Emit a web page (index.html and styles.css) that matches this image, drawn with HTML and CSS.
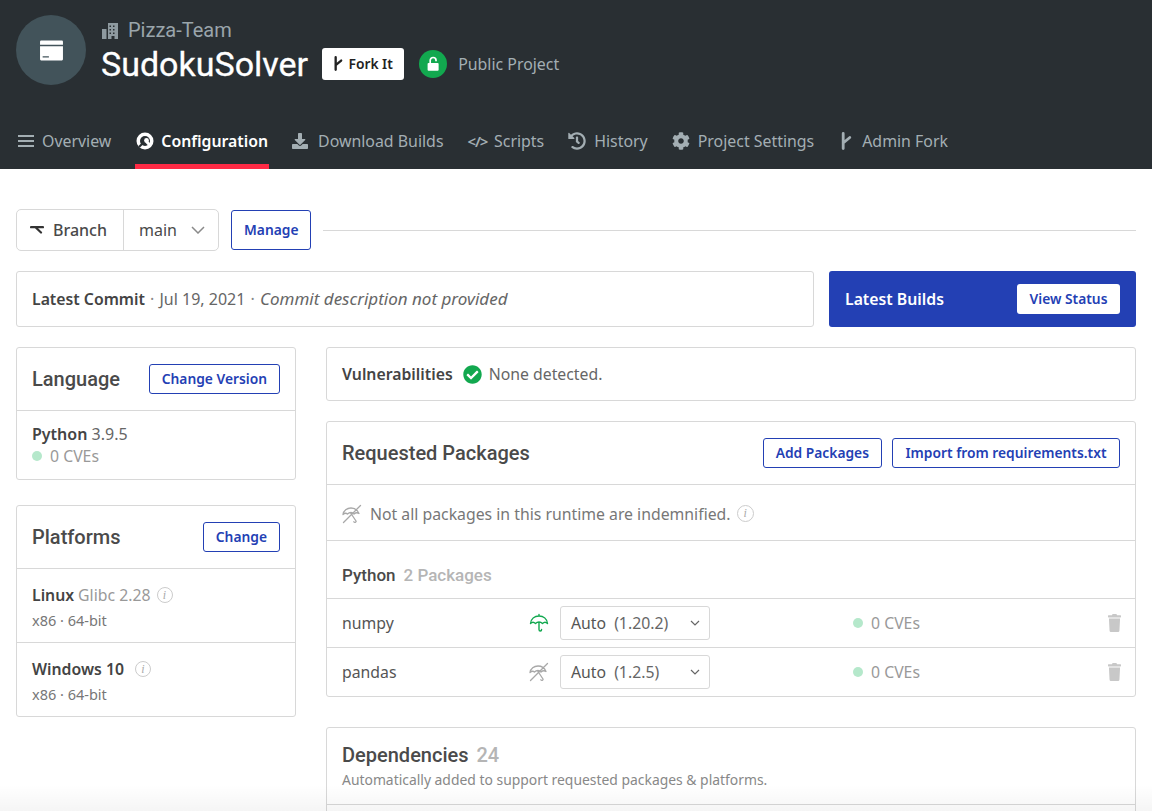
FILE: index.html
```html
<!DOCTYPE html>
<html lang="en">
<head>
    <meta charset="UTF-8">
    <meta name="viewport" content="width=device-width, initial-scale=1.0">
    <title>SudokuSolver</title>
    <link rel="stylesheet" href="styles.css">
</head>
<body>
    <svg class="icon-defs" xmlns="http://www.w3.org/2000/svg">
        <symbol id="i-fork" viewBox="0 0 12 18">
            <path d="M3.200 1.500V16.500M3.200 11L9.800 5.500" fill="none" stroke="currentColor" stroke-width="2.800" stroke-linecap="round"/>
        </symbol>
        <symbol id="i-trash" viewBox="0 0 448 512" preserveAspectRatio="none">
            <path d="M432 32H312l-9.400-18.700A24 24 0 0 0 281.100 0H166.800a23.720 23.720 0 0 0-21.400 13.300L136 32H16A16 16 0 0 0 0 48v32a16 16 0 0 0 16 16h416a16 16 0 0 0 16-16V48a16 16 0 0 0-16-16zM53.200 467a48 48 0 0 0 47.900 45h245.800a48 48 0 0 0 47.900-45L416 128H32z"/>
        </symbol>
        <symbol id="i-umbrella" viewBox="0 0 20 20">
            <path d="M1.500 10.500C2 6 5.500 3 10 3s8 3 8.500 7.500C17 9 15 9 13.500 10.500 12.500 9.500 11.200 9 10 9s-2.500.5-3.500 1.500C5 9 3 9 1.500 10.500zM10 3V1.500M10 9v7.500c0 2 2.600 2 2.600 0" fill="none" stroke="currentColor" stroke-width="1.400" stroke-linecap="round" stroke-linejoin="round"/>
        </symbol>
        <symbol id="i-no-umbrella" viewBox="0 0 20 20">
            <path d="M1 10.500C1.500 6.500 5 4 9 4c3.500 0 6.500 2 8 5.500-1.500-1-3.500-.8-5 .5-1-1-2-1.500-3-1.500S6.500 9 5.500 10C4 8.800 2.500 9.200 1 10.500zM9 9.500l5 7.500c.5 1.200-1.500 2-2.200.7M1.500 18.500L18.500 1.500" fill="none" stroke="currentColor" stroke-width="1.300" stroke-linecap="round" stroke-linejoin="round"/>
        </symbol>
    </svg>

    <header class="project-header">
        <div class="project-top">
            <div class="avatar">
                <svg class="avatar-icon" viewBox="0 0 24 24"><path d="M2 2.500h20a1 1 0 0 1 1 1V6.500H1V3.500a1 1 0 0 1 1-1zM1 8h22v12.500a1 1 0 0 1-1 1H2a1 1 0 0 1-1-1zM3.500 17.500v1.200h6v-1.200z" fill-rule="evenodd"/></svg>
            </div>
            <div class="project-info">
                <div class="org-name">
                    <svg class="org-icon" viewBox="0 0 16 16"><path d="M6 0h10v16h-3.500v-3h-3v3H6zM7.500 2.500V4H9V2.500zm3.500 0V4h1.500V2.500zM7.500 6v1.500H9V6zM11 6v1.500h1.500V6zM7.500 9.500V11H9V9.500zm3.500 0V11h1.500V9.500zM0 6h4.500v10H0z" fill-rule="evenodd"/></svg>
                    Pizza-Team
                </div>
                <div class="title-row">
                    <h1>SudokuSolver</h1>
                    <button class="fork-btn"><svg class="fork-icon"><use href="#i-fork"/></svg>Fork It</button>
                    <span class="lock-badge">
                        <svg viewBox="0 0 16 16"><path d="M4 7.200h8.200c.5 0 .8.300.8.800v5.200c0 .5-.3.800-.8.800H4c-.5 0-.8-.3-.8-.8V8c0-.5.300-.8.800-.8z"/><path d="M5.500 7.500V4.800a2.600 2.600 0 0 1 5.200 0v.8" fill="none" stroke="#fff" stroke-width="1.500"/></svg>
                    </span>
                    <span class="visibility">Public Project</span>
                </div>
            </div>
        </div>
        <nav class="tabs">
            <a class="tab">
                <svg class="tab-icon" viewBox="0 0 16 16"><path d="M0 2h16v2H0zM0 7h16v2H0zM0 12h16v2H0z"/></svg>
                Overview
            </a>
            <a class="tab active">
                <svg class="tab-icon wide" viewBox="0 0 18 18">
                    <circle cx="9" cy="9" r="8.500"/>
                    <circle cx="9" cy="9" r="5" fill="#292f33"/>
                    <path d="M10.500 9.500L14.500 14" fill="none" stroke="#fff" stroke-width="3"/>
                    <circle cx="10.500" cy="8.500" r="2.400"/>
                    <path d="M3 15L7 11" fill="none" stroke="#292f33" stroke-width="2.200"/>
                </svg>
                Configuration
            </a>
            <a class="tab tab-download">
                <svg class="tab-icon" viewBox="0 0 512 512"><path d="M216 0h80c13.300 0 24 10.700 24 24v168h87.700c17.800 0 26.700 21.500 14.100 34.100L269.700 378.300c-7.500 7.500-19.800 7.500-27.300 0L90.100 226.100c-12.600-12.600-3.700-34.100 14.100-34.100H192V24c0-13.300 10.700-24 24-24zm296 376v112c0 13.300-10.700 24-24 24H24c-13.300 0-24-10.700-24-24V376c0-13.300 10.700-24 24-24h146.700l49 49c20.100 20.100 52.500 20.100 72.600 0l49-49H488c13.300 0 24 10.700 24 24z"/></svg>
                Download Builds
            </a>
            <a class="tab tab-scripts">
                <span class="code-glyph">&lt;/&gt;</span>
                Scripts
            </a>
            <a class="tab">
                <svg class="tab-icon wide" viewBox="0 0 512 512"><path d="M504 255.531c.253 136.640-111.180 248.372-247.820 248.468-59.015.042-113.223-20.530-155.822-54.911-11.077-8.940-11.905-25.541-1.839-35.607l11.267-11.267c8.609-8.609 22.353-9.551 31.891-1.984C173.062 425.135 212.781 440 256 440c101.705 0 184-82.311 184-184 0-101.705-82.311-184-184-184-48.814 0-93.149 18.969-126.068 49.932l50.754 50.754c10.080 10.080 2.941 27.314-11.313 27.314H24c-8.837 0-16-7.163-16-16V38.627c0-14.254 17.234-21.393 27.314-11.314l49.372 49.372C129.209 34.136 189.552 8 256 8c136.810 0 247.747 110.780 248 247.531zm-180.912 78.784l9.823-12.630c8.138-10.463 6.253-25.542-4.210-33.679L288 256.349V152c0-13.255-10.745-24-24-24h-16c-13.255 0-24 10.745-24 24v135.651l65.409 50.874c10.463 8.137 25.541 6.253 33.679-4.210z"/></svg>
                History
            </a>
            <a class="tab">
                <svg class="tab-icon wide" viewBox="0 0 512 512"><path d="M487.400 315.700l-42.600-24.600c4.300-23.200 4.300-47 0-70.200l42.600-24.600c4.900-2.800 7.100-8.600 5.500-14-11.100-35.600-30-67.800-54.700-94.600-3.800-4.100-10-5.100-14.800-2.300L380.800 110c-17.900-15.400-38.500-27.300-60.800-35.100V25.800c0-5.600-3.900-10.500-9.400-11.700-36.700-8.200-74.300-7.800-109.200 0-5.500 1.200-9.400 6.100-9.400 11.700V75c-22.200 7.900-42.800 19.800-60.800 35.100L88.700 85.500c-4.900-2.800-11-1.900-14.800 2.300-24.700 26.700-43.600 58.900-54.700 94.600-1.700 5.400.6 11.200 5.500 14L67.300 221c-4.300 23.200-4.300 47 0 70.200l-42.600 24.600c-4.900 2.800-7.100 8.600-5.500 14 11.100 35.600 30 67.800 54.700 94.600 3.800 4.100 10 5.100 14.800 2.300l42.600-24.600c17.900 15.400 38.500 27.300 60.800 35.100v49.200c0 5.600 3.900 10.500 9.400 11.700 36.700 8.200 74.300 7.800 109.200 0 5.500-1.200 9.400-6.100 9.400-11.700v-49.200c22.200-7.900 42.800-19.800 60.800-35.100l42.600 24.600c4.900 2.800 11 1.900 14.800-2.300 24.700-26.700 43.600-58.900 54.700-94.600 1.500-5.500-.7-11.300-5.600-14.100zM256 336c-44.100 0-80-35.900-80-80s35.900-80 80-80 80 35.900 80 80-35.900 80-80 80z"/></svg>
                Project Settings
            </a>
            <a class="tab tab-fork">
                <svg class="tab-icon narrow"><use href="#i-fork"/></svg>
                Admin Fork
            </a>
        </nav>
    </header>

    <main class="content">
        <div class="branch-row">
            <div class="branch-group">
                <div class="branch-label">
                    <svg class="branch-icon" viewBox="0 0 14 10"><path d="M1 2.200H13M6 2.800L11 7.500" fill="none" stroke="currentColor" stroke-width="2.200" stroke-linecap="round"/></svg>
                    Branch
                </div>
                <div class="branch-select">
                    main
                    <svg class="chevron-big" viewBox="0 0 14 8"><path d="M1 1l6 6 6-6" fill="none" stroke="currentColor" stroke-width="1.500"/></svg>
                </div>
            </div>
            <button class="btn">Manage</button>
            <div class="branch-line"></div>
        </div>

        <div class="commit-row">
            <div class="card commit-card">
                <p><strong>Latest Commit</strong> <span class="sep">·</span> Jul 19, 2021 <span class="sep">·</span> <em>Commit description not provided</em></p>
            </div>
            <div class="builds-card">
                <span>Latest Builds</span>
                <button class="btn-white">View Status</button>
            </div>
        </div>

        <div class="columns">
            <aside class="side-col">
                <section class="card">
                    <div class="card-head">
                        <h2>Language</h2>
                        <button class="btn">Change Version</button>
                    </div>
                    <div class="lang-body">
                        <div class="lang-name"><strong>Python</strong> <span class="muted">3.9.5</span></div>
                        <div class="cve"><i class="dot"></i>0 CVEs</div>
                    </div>
                </section>
                <section class="card">
                    <div class="card-head">
                        <h2>Platforms</h2>
                        <button class="btn">Change</button>
                    </div>
                    <div class="platform">
                        <div class="platform-name"><strong>Linux</strong> <span class="lighter">Glibc 2.28</span><span class="info">i</span></div>
                        <div class="platform-arch">x86 · 64-bit</div>
                    </div>
                    <div class="platform">
                        <div class="platform-name"><strong>Windows 10</strong><span class="info spaced">i</span></div>
                        <div class="platform-arch">x86 · 64-bit</div>
                    </div>
                </section>
            </aside>

            <div class="main-col">
                <section class="card vuln-card">
                    <strong>Vulnerabilities</strong>
                    <svg class="check" viewBox="0 0 512 512"><path d="M504 256c0 136.967-111.033 248-248 248S8 392.967 8 256 119.033 8 256 8s248 111.033 248 248zM227.314 387.314l184-184c6.248-6.248 6.248-16.379 0-22.627l-22.627-22.627c-6.248-6.249-16.379-6.249-22.628 0L216 308.118l-70.059-70.059c-6.248-6.248-16.379-6.248-22.628 0l-22.627 22.627c-6.248 6.248-6.248 16.379 0 22.627l104 104c6.249 6.249 16.379 6.249 22.628.001z"/></svg>
                    <span class="muted">None detected.</span>
                </section>

                <section class="card">
                    <div class="card-head">
                        <h2>Requested Packages</h2>
                        <div class="head-actions">
                            <button class="btn">Add Packages</button>
                            <button class="btn">Import from requirements.txt</button>
                        </div>
                    </div>
                    <div class="indemnify">
                        <svg class="no-umbrella"><use href="#i-no-umbrella"/></svg>
                        Not all packages in this runtime are indemnified.
                        <span class="info">i</span>
                    </div>
                    <div class="pkg-group">
                        <strong>Python</strong><span class="pkg-count">2 Packages</span>
                    </div>
                    <div class="pkg-row">
                        <span class="pkg-name">numpy</span>
                        <svg class="umbrella"><use href="#i-umbrella"/></svg>
                        <div class="version-select">Auto<span>(1.20.2)</span><svg class="chevron" viewBox="0 0 10 6"><path d="M1 1l4 4 4-4" fill="none" stroke="currentColor" stroke-width="1.200"/></svg></div>
                        <div class="pkg-cve"><i class="dot"></i>0 CVEs</div>
                        <svg class="trash"><use href="#i-trash"/></svg>
                    </div>
                    <div class="pkg-row">
                        <span class="pkg-name">pandas</span>
                        <svg class="no-umbrella"><use href="#i-no-umbrella"/></svg>
                        <div class="version-select">Auto<span>(1.2.5)</span><svg class="chevron" viewBox="0 0 10 6"><path d="M1 1l4 4 4-4" fill="none" stroke="currentColor" stroke-width="1.200"/></svg></div>
                        <div class="pkg-cve"><i class="dot"></i>0 CVEs</div>
                        <svg class="trash"><use href="#i-trash"/></svg>
                    </div>
                </section>

                <section class="card deps-card">
                    <div class="deps-head">
                        <h2>Dependencies <span class="deps-count">24</span></h2>
                        <p>Automatically added to support requested packages &amp; platforms.</p>
                    </div>
                </section>
            </div>
        </div>
    </main>
    <div class="bottom-fade"></div>
</body>
</html>
```

FILE: styles.css
```css
html, body {
    height: 811px;
    overflow: hidden;
}
body {
    margin: 0;
    position: relative;
    font-family: "Noto Sans", "Open Sans", sans-serif;
    font-size: 15.8px;
    color: #4a4a4a;
    background-color: white;
}
strong {
    font-weight: 600;
    color: #444;
}
button {
    font-family: inherit;
    cursor: pointer;
}
svg {
    fill: currentColor;
    flex: none;
}
.icon-defs {
    display: none;
}

/* header */
.project-header {
    height: 169px;
    box-sizing: border-box;
    padding: 15px 16px 0;
    background-color: #292f33;
    display: flex;
    flex-direction: column;
}
.project-top {
    display: flex;
    gap: 15px;
    height: 70px;
}
.avatar {
    width: 70px;
    height: 70px;
    border-radius: 50%;
    background-color: #42535a;
    display: flex;
    align-items: center;
    justify-content: center;
}
.avatar-icon {
    width: 25px;
    height: 25px;
    color: white;
}
.project-info {
    display: flex;
    flex-direction: column;
}
.org-name {
    font-family: Roboto, sans-serif;
    font-size: 20px;
    line-height: 23px;
    margin-top: 4px;
    padding-left: 1px;
    color: #9aa5ab;
    display: flex;
    align-items: center;
    gap: 10px;
}
.org-icon {
    width: 16px;
    height: 16px;
    color: #8e9aa0;
}
.title-row {
    display: flex;
    align-items: center;
    height: 36px;
    margin-top: 4px;
}
h1 {
    margin: 0;
    font-family: Roboto, sans-serif;
    font-weight: 400;
    font-size: 34px;
    color: white;
    -webkit-text-stroke: 0.3px white;
}
.fork-btn {
    margin-left: 14px;
    width: 82px;
    height: 32px;
    padding: 0 0 2px;
    border: none;
    border-radius: 3px;
    background-color: white;
    color: #222;
    font-size: 13.8px;
    font-weight: 600;
    display: flex;
    align-items: center;
    justify-content: center;
    gap: 5px;
}
.fork-icon {
    width: 10px;
    height: 15px;
}
.lock-badge {
    margin-left: 15px;
    width: 28px;
    height: 28px;
    border-radius: 50%;
    background-color: #12a84f;
    display: flex;
    align-items: center;
    justify-content: center;
    color: white;
}
.lock-badge svg {
    width: 18px;
    height: 18px;
}
.visibility {
    margin-left: 11px;
    font-size: 15.9px;
    color: #a3aeb3;
}
.tabs {
    display: flex;
    gap: 24px;
    margin-top: auto;
    margin-left: 2px;
}
.tab {
    display: flex;
    align-items: center;
    gap: 8px;
    height: 44px;
    padding-bottom: 8px;
    box-sizing: border-box;
    font-size: 15.9px;
    color: #a3aeb3;
    border-bottom: 5px solid transparent;
}
.tab.active {
    color: white;
    font-size: 15.8px;
    font-weight: 600;
    border-bottom-color: #ff2a45;
    gap: 7px;
    padding: 0 1px 8px;
    margin-right: -1px;
}
.tab-download {
    gap: 10px;
}
.tab-scripts {
    gap: 7px;
}
.tab-fork {
    margin-left: 2px;
    gap: 10px;
}
.tab-icon {
    width: 16px;
    height: 16px;
}
.tab-icon.wide {
    width: 18px;
    height: 18px;
}
.tab-icon.narrow {
    width: 12px;
    height: 18px;
}
.code-glyph {
    font-size: 15px;
    font-weight: 600;
    letter-spacing: -1.2px;
}

/* content */
.content {
    padding: 40px 16px 0;
}
.branch-row {
    display: flex;
    align-items: center;
    gap: 12px;
}
.branch-group {
    display: flex;
    height: 42px;
    width: 203px;
    box-sizing: border-box;
    border: 1px solid #d8d8d8;
    border-radius: 5px;
}
.branch-label {
    width: 107px;
    flex: none;
    border-right: 1px solid #d8d8d8;
    display: flex;
    align-items: center;
    gap: 9px;
    padding-left: 13px;
    box-sizing: border-box;
    font-size: 16px;
    font-weight: 500;
}
.branch-icon {
    width: 14px;
    height: 10px;
    color: #333;
}
.branch-select {
    flex: 1;
    display: flex;
    align-items: center;
    justify-content: space-between;
    padding: 0 13px 0 15px;
    font-size: 16px;
}
.chevron-big {
    width: 14px;
    height: 8px;
    color: #8a8a8a;
}
.btn {
    height: 30px;
    padding: 0 12px 1px;
    border: 1px solid #2340b4;
    border-radius: 3px;
    background-color: white;
    color: #2340b4;
    font-size: 13.8px;
    font-weight: 600;
    white-space: nowrap;
}
.branch-row .btn {
    height: 40px;
}
.branch-line {
    flex: 1;
    height: 1px;
    background-color: #d8d8d8;
}
.card {
    border: 1px solid #d8d8d8;
    border-radius: 3px;
    background-color: white;
}
.commit-row {
    display: flex;
    gap: 15px;
    margin-top: 20px;
    height: 56px;
}
.commit-card {
    flex: 1;
    display: flex;
    align-items: center;
    padding: 0 0 1px 15px;
    color: #666;
}
.commit-card p {
    margin: 0;
    font-size: 16px;
    line-height: 22px;
}
.commit-card strong {
    font-size: 15.8px;
}
.commit-card em {
    font-size: 17px;
    line-height: 1;
}
.sep {
    margin: 0 1px;
    color: #888;
}
.builds-card {
    width: 307px;
    box-sizing: border-box;
    padding: 0 16px;
    border-radius: 3px;
    background-color: #2340b4;
    color: white;
    font-weight: 600;
    display: flex;
    align-items: center;
    justify-content: space-between;
}
.btn-white {
    width: 103px;
    height: 30px;
    padding: 0 0 1px;
    border: none;
    border-radius: 3px;
    background-color: white;
    color: #2340b4;
    font-size: 13.8px;
    font-weight: 600;
}
.columns {
    display: flex;
    gap: 30px;
    margin-top: 20px;
    align-items: flex-start;
}
.side-col {
    width: 280px;
    flex: none;
    display: flex;
    flex-direction: column;
    gap: 25px;
}
.main-col {
    flex: 1;
    display: flex;
    flex-direction: column;
    gap: 20px;
}
.card-head {
    height: 63px;
    box-sizing: border-box;
    padding: 0 15px;
    border-bottom: 1px solid #d8d8d8;
    display: flex;
    align-items: center;
    justify-content: space-between;
}
h2 {
    margin: 0;
    font-family: Roboto, sans-serif;
    font-size: 20px;
    font-weight: 500;
    color: #4a4a4a;
}
.head-actions {
    display: flex;
    gap: 10px;
}
.head-actions .btn:last-child {
    padding: 0 12.5px 1px;
}
.muted {
    color: #666;
}
.lang-body {
    padding: 12px 15px 0;
    line-height: 22px;
    height: 56px;
}
.lang-name {
    font-size: 16px;
}
.cve {
    display: flex;
    align-items: center;
    color: #999;
}
.dot {
    width: 10px;
    height: 10px;
    border-radius: 50%;
    background-color: #b5e8cb;
    margin-right: 8px;
}
.platform {
    height: 74px;
    box-sizing: border-box;
    padding: 14px 15px 0;
    border-bottom: 1px solid #d8d8d8;
}
.platform:last-child {
    border-bottom: none;
    height: 73px;
}
.platform-name {
    display: flex;
    align-items: center;
    gap: 4px;
    line-height: 24px;
}
.lighter {
    color: #999;
}
.platform-arch {
    margin-top: 2px;
    font-size: 14.5px;
    line-height: 22px;
    color: #777;
}
.info {
    width: 16px;
    height: 16px;
    box-sizing: border-box;
    border: 1px solid #ccc;
    border-radius: 50%;
    color: #aaa;
    font-family: "Liberation Serif", serif;
    font-style: italic;
    font-size: 12px;
    line-height: 14px;
    text-align: center;
    display: inline-block;
    flex: none;
    margin-left: 2px;
}
.info.spaced {
    margin-left: 7px;
}
.indemnify .info {
    width: 17px;
    height: 17px;
    line-height: 15px;
    margin-left: 0;
}
.vuln-card {
    height: 54px;
    box-sizing: border-box;
    display: flex;
    align-items: center;
    padding-left: 15px;
}
.check {
    width: 19px;
    height: 19px;
    color: #12a84f;
    margin: 0 7px 0 10px;
}
.indemnify {
    height: 56px;
    box-sizing: border-box;
    padding: 2px 0 0 15px;
    border-bottom: 1px solid #d8d8d8;
    display: flex;
    align-items: center;
    color: #777;
    gap: 6px;
}
.indemnify .no-umbrella {
    margin-right: 2px;
}
.no-umbrella {
    width: 20px;
    height: 20px;
    color: #a8a8a8;
}
.pkg-group {
    height: 58px;
    box-sizing: border-box;
    padding: 24px 15px 0;
    border-bottom: 1px solid #d8d8d8;
    font-family: Roboto, sans-serif;
    font-size: 17px;
    font-weight: 500;
    line-height: 20px;
}
.pkg-group strong {
    font-weight: 500;
    color: #4a4a4a;
}
.pkg-count {
    margin-left: 8px;
    color: #b5b5b5;
}
.pkg-row {
    height: 49px;
    box-sizing: border-box;
    padding: 0 15px;
    border-bottom: 1px solid #d8d8d8;
    display: flex;
    align-items: center;
}
.pkg-row:last-child {
    border-bottom: none;
    height: 48px;
}
.pkg-name {
    width: 187px;
    flex: none;
    color: #555;
}
.umbrella {
    width: 20px;
    height: 20px;
    color: #12a84f;
    flex: none;
}
.version-select {
    width: 150px;
    height: 34px;
    box-sizing: border-box;
    margin-left: 11px;
    padding: 0 9px 0 10px;
    border: 1px solid #d8d8d8;
    border-radius: 3px;
    display: flex;
    align-items: center;
    color: #555;
}
.version-select span {
    margin-left: 8px;
    color: #666;
}
.chevron {
    width: 10px;
    height: 6px;
    margin-left: auto;
    color: #666;
}
.pkg-cve {
    margin-left: 143px;
    display: flex;
    align-items: center;
    color: #999;
}
.trash {
    width: 13px;
    height: 18px;
    margin-left: auto;
    margin-right: -1px;
    color: #c8c8c8;
}
.deps-card {
    margin-top: 10px;
    height: 200px;
}
.deps-head {
    height: 77px;
    box-sizing: border-box;
    padding: 15px 15px 0;
    border-bottom: 1px solid #d8d8d8;
}
.deps-count {
    margin-left: 3px;
    color: #b5b5b5;
}
.deps-head p {
    margin: 3px 0 0;
    font-size: 13.9px;
    line-height: 20px;
    color: #888;
}
.bottom-fade {
    position: absolute;
    left: 0;
    right: 0;
    bottom: 0;
    height: 26px;
    pointer-events: none;
    background: linear-gradient(to top, rgba(0,0,0,0.04), rgba(0,0,0,0));
}
```
